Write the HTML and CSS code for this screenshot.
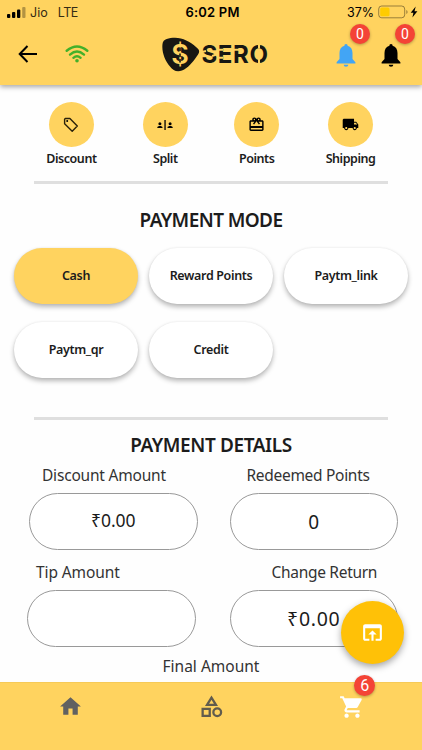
FILE: index.html
```
<!DOCTYPE html>
<html lang="en">
<head>
    <meta charset="UTF-8">
    <meta name="viewport" content="width=device-width, initial-scale=1">
    <title>Sero - Payment</title>
    <link rel="stylesheet" href="styles.css">
</head>
<body>
<div class="app">
    <header class="header">
        <div class="status">
            <div class="carrier">
                <svg width="19" height="11" viewBox="0 0 19 11">
                    <rect x="0" y="7" width="3.3" height="4" rx="1"/>
                    <rect x="5" y="5" width="3.3" height="6" rx="1"/>
                    <rect x="10" y="2.5" width="3.3" height="8.5" rx="1"/>
                    <rect x="15.2" y="0" width="3.3" height="11" rx="1" opacity=".3"/>
                </svg>
                <span>Jio</span>
                <span class="lte">LTE</span>
            </div>
            <div class="time">6:02 PM</div>
            <div class="power">
                <span>37%</span>
                <svg width="40" height="14" viewBox="0 0 40 14">
                    <rect x=".7" y="1" width="26" height="11.8" rx="3" fill="none" stroke="#000" stroke-opacity=".4"/>
                    <rect x="2.2" y="2.5" width="9.3" height="8.8" rx="1.5" fill="#ffcc00"/>
                    <path d="M28.3 5v4q1.3-.6 1.3-2t-1.3-2z" opacity=".4"/>
                    <path d="M37.7 1.5l-5 6.2h2.7l-1 4.8 5-6.3h-2.9z"/>
                </svg>
            </div>
        </div>
        <div class="toolbar">
            <svg class="back" width="20" height="20" viewBox="0 0 20 20"><path d="M19 10H2M9.500 2L1.700 10l7.800 8" fill="none" stroke="#000" stroke-width="2"/></svg>
            <svg class="wifi" width="24" height="18" viewBox="0 0 24 18">
                <g fill="none" stroke="#43b02a" stroke-width="2.4" stroke-linecap="round">
                    <path d="M1.700 5.700Q12-2.800 22.300 5.700"/>
                    <path d="M5 9.600Q12 3.600 19 9.600"/>
                    <path d="M8.400 12.800Q12 9.600 15.600 12.800"/>
                </g>
                <circle cx="12" cy="15.800" r="1.800" fill="#43b02a"/>
            </svg>
            <svg class="logo" width="108" height="36" viewBox="0 0 108 36">
                <path d="M.5 7C1 2 7 .8 13 .8c8 0 15 4 21 9.200 4 3 4 5 1 9-4 6-9 12-15 14.500-5 2-9 0-12-4C3 24-.5 15 .5 7z" fill="#171713"/>
                <text class="dollar" x="18" y="27.300" text-anchor="middle">$</text>
                <path d="M18 10.500v3.500M18 16.500v3.500M18 22v3.500" stroke="#171713" stroke-width="1.600"/>
                <text class="wordmark" x="39.500" y="26" textLength="66.500" lengthAdjust="spacing">SERO</text>
                <path d="M38 15.500l6-1.500M50 19l6-2M55 12.800h6M55 20.800h6M71 12.800h6M97 6.500v5M97 22v5.500" stroke="#ffd35f" stroke-width="2"/>
            </svg>
            <div class="bell blue">
                <svg width="20" height="24" viewBox="0 0 20 24"><path d="M10 1a1.600 1.600 0 0 0-1.600 1.800C5.200 3.600 3.500 6.500 3.500 10v6L.6 19.200V20.500H19.400V19.200L16.500 16v-6c0-3.500-1.700-6.400-4.900-7.200A1.600 1.600 0 0 0 10 1zM7.700 21.700a2.300 2 0 0 0 4.600 0z"/></svg>
                <span class="badge">0</span>
            </div>
            <div class="bell">
                <svg width="20" height="24" viewBox="0 0 20 24"><path d="M10 1a1.600 1.600 0 0 0-1.600 1.800C5.200 3.600 3.500 6.500 3.500 10v6L.6 19.200V20.500H19.400V19.200L16.500 16v-6c0-3.500-1.700-6.400-4.900-7.200A1.600 1.600 0 0 0 10 1zM7.700 21.700a2.300 2 0 0 0 4.600 0z"/></svg>
                <span class="badge">0</span>
            </div>
        </div>
    </header>

    <main class="content">
        <div class="actions">
            <div class="action wide">
                <div class="circle">
                    <svg width="16" height="16" viewBox="0 0 16 16"><path d="M2.300 1.500h4.600L14.300 9 9.200 14.200 1.600 6.800V2.200z" fill="none" stroke="#2a210a" stroke-width="1.400" stroke-linejoin="round"/><circle cx="4.200" cy="4.100" r="1"/></svg>
                </div>
                <span>Discount</span>
            </div>
            <div class="action">
                <div class="circle">
                    <svg width="16" height="12" viewBox="0 0 16 12"><path d="M7.400 1h1.300v10H7.400zM.3 8.500c0-2 5.200-2 5.200 0V9H.3zM10.500 8.500c0-2 5.200-2 5.200 0V9h-5.200z"/><circle cx="2.900" cy="4.700" r="1.500"/><circle cx="13.100" cy="4.700" r="1.500"/></svg>
                </div>
                <span>Split</span>
            </div>
            <div class="action">
                <div class="circle">
                    <svg width="17" height="17" viewBox="0 0 24 24"><path d="M20 6h-2.180c.11-.31.18-.65.18-1 0-1.660-1.340-3-3-3-1.050 0-1.960.54-2.500 1.350l-.5.67-.5-.68C10.960 2.540 10.050 2 9 2 7.340 2 6 3.340 6 5c0 .35.07.69.18 1H4c-1.110 0-1.990.89-1.990 2L2 19c0 1.110.89 2 2 2h16c1.110 0 2-.89 2-2V8c0-1.110-.89-2-2-2zm-5-2c.55 0 1 .45 1 1s-.45 1-1 1-1-.45-1-1 .45-1 1-1zM9 4c.55 0 1 .45 1 1s-.45 1-1 1-1-.45-1-1 .45-1 1-1zm11 15H4v-2h16v2zm0-5H4V8h5.080L7 10.830 8.620 12 11 8.760l1-1.360 1 1.360L15.380 12 17 10.830 14.920 8H20v6z"/></svg>
                </div>
                <span>Points</span>
            </div>
            <div class="action wide">
                <div class="circle">
                    <svg width="17" height="17" viewBox="0 0 24 24"><path d="M20 8h-3V4H3c-1.100 0-2 .9-2 2v11h2c0 1.660 1.340 3 3 3s3-1.340 3-3h6c0 1.660 1.340 3 3 3s3-1.340 3-3h2v-5l-3-4zM6 18.500c-.83 0-1.500-.67-1.500-1.500s.67-1.500 1.500-1.500 1.500.67 1.500 1.500-.67 1.500-1.500 1.500zm13.500-9l1.960 2.500H17V9.500h2.500zm-1.500 9c-.83 0-1.500-.67-1.500-1.500s.67-1.500 1.500-1.500 1.500.67 1.500 1.500-.67 1.500-1.500 1.500z"/></svg>
                </div>
                <span>Shipping</span>
            </div>
        </div>
        <hr>

        <h2 class="mode-title">PAYMENT MODE</h2>
        <div class="modes">
            <button class="mode on">Cash</button>
            <button class="mode">Reward Points</button>
            <button class="mode">Paytm_link</button>
            <button class="mode">Paytm_qr</button>
            <button class="mode">Credit</button>
        </div>
        <hr>

        <h2 class="details-title">PAYMENT DETAILS</h2>
        <div class="row">
            <div class="field discount">
                <label>Discount Amount</label>
                <div class="box"><span>₹0.00</span></div>
            </div>
            <div class="field redeemed">
                <label>Redeemed Points</label>
                <div class="box"><span>0</span></div>
            </div>
        </div>
        <div class="row second">
            <div class="field tip">
                <label>Tip Amount</label>
                <div class="box"></div>
            </div>
            <div class="field change">
                <label>Change Return</label>
                <div class="box"><span>₹0.00</span></div>
            </div>
        </div>
        <div class="final">Final Amount</div>
    </main>

    <button class="fab">
        <svg width="25" height="25" viewBox="0 0 24 24"><path d="M19 4H5c-1.110 0-2 .9-2 2v12c0 1.100.89 2 2 2h4v-2H5V8h14v10h-4v2h4c1.100 0 2-.9 2-2V6c0-1.100-.89-2-2-2zm-7 6l-4 4h3v6h2v-6h3l-4-4z"/></svg>
    </button>

    <nav class="nav">
        <a class="tab"><svg width="25" height="25" viewBox="0 0 24 24"><path d="M10 20v-6h4v6h5v-8h3L12 3 2 12h3v8z"/></svg></a>
        <a class="tab"><svg width="25" height="25" viewBox="0 0 24 24"><path d="M12 3.500L7.700 10.500h8.600z M3.500 14.200h6.800v6.800H3.500z" fill="none" stroke="#625c4d" stroke-width="2.200"/><circle cx="17.500" cy="17.500" r="3.700" fill="none" stroke="#625c4d" stroke-width="2.200"/></svg></a>
        <a class="tab cart">
            <svg width="26" height="26" viewBox="0 0 24 24"><path d="M7 18c-1.100 0-1.990.9-1.990 2S5.900 22 7 22s2-.9 2-2-.9-2-2-2zM1 2v2h2l3.600 7.590-1.350 2.450c-.16.28-.25.61-.25.960 0 1.100.9 2 2 2h12v-2H7.420c-.14 0-.25-.11-.25-.25l.03-.12.9-1.630h7.450c.75 0 1.410-.41 1.750-1.030l3.580-6.490c.08-.14.12-.31.12-.48 0-.55-.45-1-1-1H5.210l-.94-2H1zm16 16c-1.100 0-1.990.9-1.990 2s.89 2 1.990 2 2-.9 2-2-.9-2-2-2z"/></svg>
            <span class="badge">6</span>
        </a>
    </nav>
</div>
</body>
</html>
```
FILE: styles.css
```
*{
    margin: 0;
    padding: 0;
    box-sizing: border-box;
}
body{
    font-family: "Noto Sans", sans-serif;
    color: #1c1c1c;
    background: #fefefe;
}
svg{
    display: block;
    flex: none;
}
.app{
    position: relative;
    height: 750px;
    display: flex;
    flex-direction: column;
    overflow: hidden;
}
.header{
    height: 85px;
    flex: none;
    background: #ffd35f;
    box-shadow: 0 2px 5px rgba(0,0,0,0.35);
}
.status{
    height: 24px;
    display: grid;
    grid-template-columns: 1fr auto 1fr;
    align-items: center;
    padding: 0 4px 0 7px;
    font-family: Inter, sans-serif;
    font-size: 12.5px;
    color: #000;
}
.carrier, .power{
    display: flex;
    align-items: center;
}
.carrier{
    gap: 4px;
    color: #352c14;
}
.lte{
    margin-left: 6px;
    letter-spacing: -0.4px;
}
.time{
    font-size: 13px;
    font-weight: 600;
    letter-spacing: 0.2px;
}
.power{
    justify-content: flex-end;
    gap: 4px;
}
.toolbar{
    height: 61px;
    display: flex;
    align-items: center;
    padding-left: 18px;
}
.back{
    margin-top: -2px;
}
.wifi{
    margin: -2px 0 0 27px;
}
.logo{
    margin: 0 0 0 73px;
}
.dollar{
    font: 600 27px Inter, sans-serif;
    fill: #ffd35f;
}
.wordmark{
    font: 700 24px Inter, sans-serif;
    fill: #171713;
}
.bell{
    position: relative;
    margin-left: 25px;
}
.blue{
    margin-left: 66px;
}
.blue svg{
    fill: #42a5f5;
}
.badge{
    position: absolute;
    top: -19px;
    left: 14px;
    width: 20px;
    height: 20px;
    border-radius: 50%;
    background: #f44336;
    box-shadow: 0 1px 3px rgba(0,0,0,0.3);
    color: #fff;
    font: 14px/20px Roboto, sans-serif;
    text-align: center;
}
.content{
    flex: 1;
}
.actions{
    display: flex;
    justify-content: space-evenly;
    padding-top: 17px;
    height: 96px;
}
.action{
    width: 45px;
    display: flex;
    flex-direction: column;
    align-items: center;
    font-size: 12.5px;
    font-weight: 600;
    line-height: 18px;
    letter-spacing: -0.45px;
    white-space: nowrap;
}
.wide{
    width: 50px;
}
.circle{
    width: 45px;
    height: 45px;
    margin-bottom: 3px;
    border-radius: 50%;
    background: #ffd35f;
    display: flex;
    align-items: center;
    justify-content: center;
}
hr{
    height: 3px;
    margin: 0 34px;
    border: none;
    background: #dfdfdf;
}
h2{
    font-size: 19px;
    font-weight: 600;
    line-height: 26px;
    letter-spacing: -0.6px;
    text-align: center;
}
.mode-title{
    padding: 23px 0 15px;
}
.modes{
    display: grid;
    grid-template-columns: repeat(3, 124px);
    gap: 18px 11px;
    justify-content: center;
    height: 169px;
    grid-auto-rows: 56px;
}
.mode{
    border: none;
    border-radius: 28px;
    background: #fff;
    box-shadow: 0 3px 5px rgba(0,0,0,0.28), 0 0 2px rgba(0,0,0,0.08);
    padding-bottom: 2px;
    font: 600 12.5px "Noto Sans", sans-serif;
    letter-spacing: -0.35px;
    color: #1c1c1c;
}
.mode.on{
    background: #ffd35f;
}
.details-title{
    padding-top: 12px;
    letter-spacing: -0.4px;
}
.row{
    display: flex;
    padding-left: 29px;
    gap: 32px;
    height: 97px;
}
.second{
    padding-left: 27px;
    gap: 34px;
}
.field{
    width: 168.5px;
}
.field label{
    display: block;
    height: 35px;
    line-height: 34px;
    font-size: 15.5px;
    letter-spacing: -0.2px;
    white-space: nowrap;
    color: #333;
}
.discount label{
    padding-left: 13px;
}
.redeemed label{
    padding-left: 17px;
    letter-spacing: -0.3px;
}
.tip label{
    padding-left: 9px;
    letter-spacing: -0.1px;
}
.change label{
    padding-left: 42px;
    letter-spacing: -0.3px;
}
.box{
    height: 57px;
    border: 1px solid #999;
    border-radius: 29px;
    background: #fff;
    display: flex;
    align-items: center;
    justify-content: center;
    font-size: 19px;
}
.discount .box{
    font-size: 17.5px;
    padding-bottom: 4px;
}
.change .box{
    font-size: 19.5px;
    letter-spacing: 0.7px;
}
.final{
    line-height: 26px;
    font-size: 15.5px;
    text-align: center;
    margin-top: 1px;
    color: #333;
}
.fab{
    position: absolute;
    right: 18px;
    bottom: 86px;
    width: 63px;
    height: 63px;
    border: none;
    border-radius: 50%;
    background: #ffc107;
    box-shadow: 0 3px 7px rgba(0,0,0,0.35);
    display: flex;
    align-items: center;
    justify-content: center;
}
.fab svg{
    fill: #fff;
}
.nav{
    height: 68px;
    flex: none;
    background: #ffd35f;
    border-top: 1px solid #f6ca57;
    display: flex;
    padding-top: 11px;
}
.tab{
    position: relative;
    flex: 1;
    display: flex;
    justify-content: center;
    height: 25px;
}
.tab svg{
    fill: #616161;
}
.tab.cart svg{
    fill: #fff;
}
.cart .badge{
    top: -19px;
    left: 73px;
    width: 21px;
    height: 21px;
    font-size: 16px;
    line-height: 21px;
}
```
